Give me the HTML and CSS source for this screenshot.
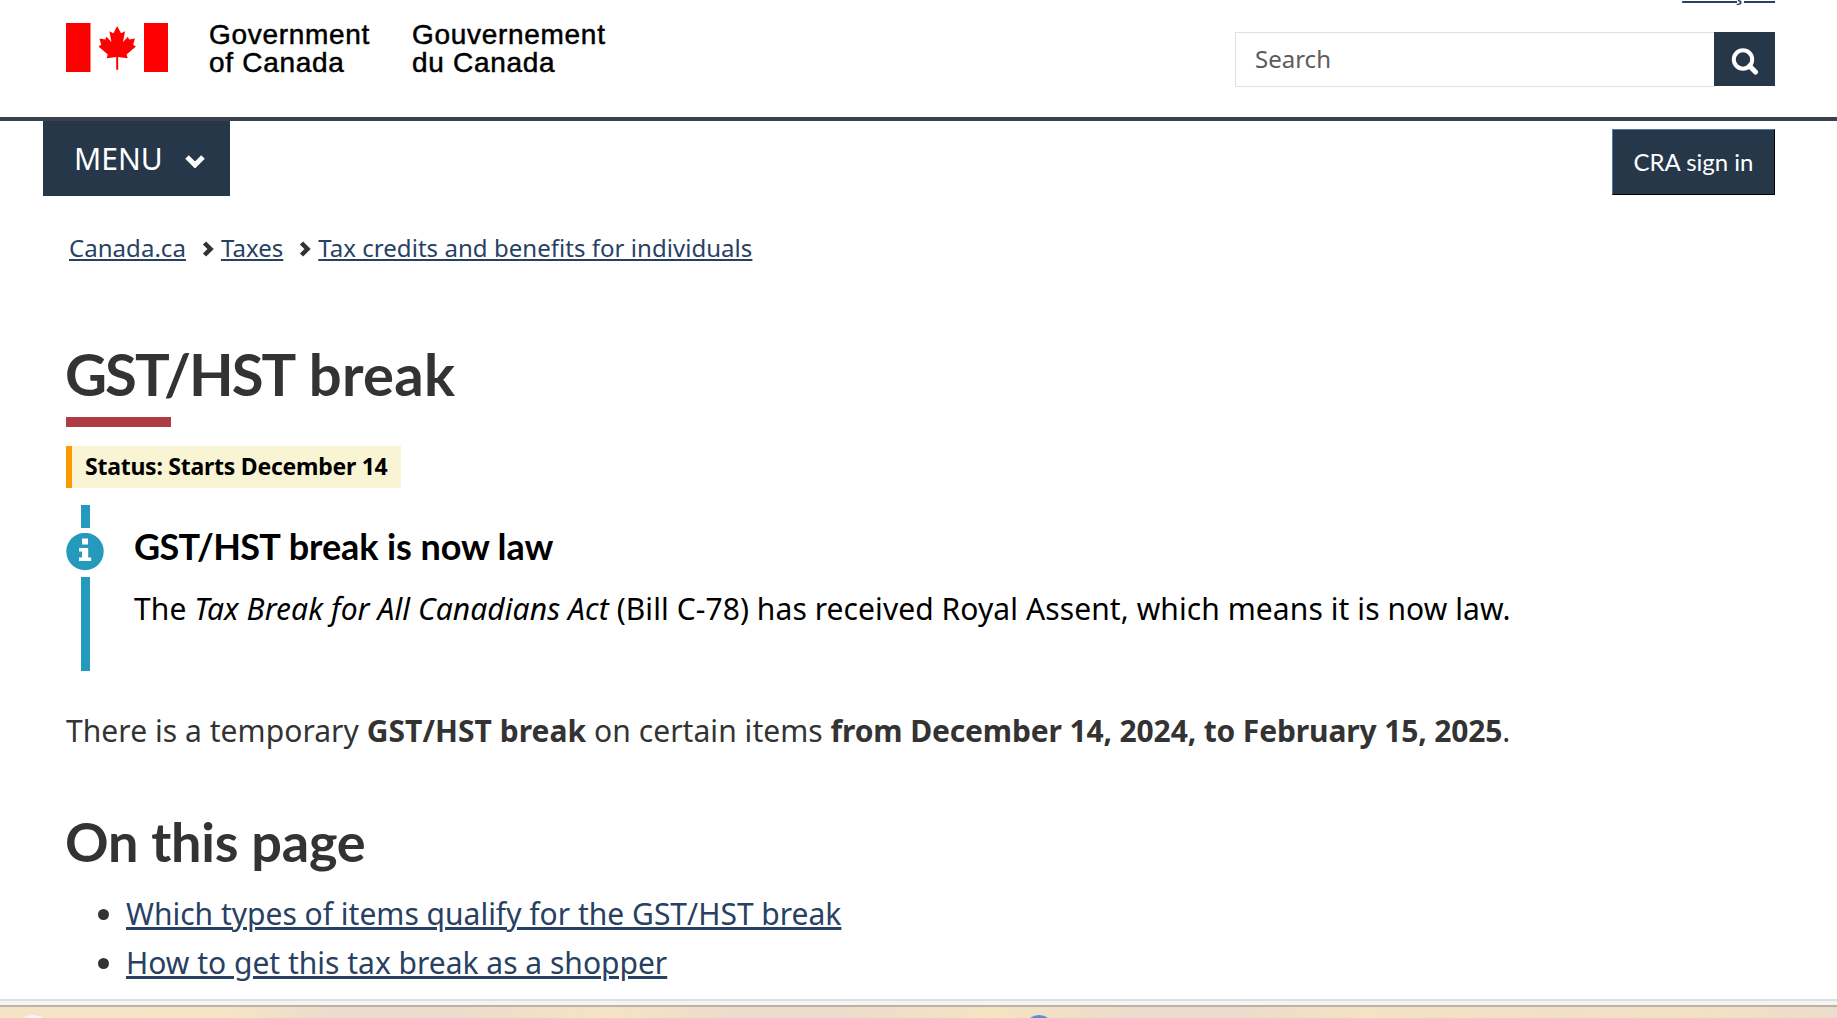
FILE: index.html
```html
<!DOCTYPE html>
<html lang="en">
<head>
  <meta charset="UTF-8" />
  <title>GST/HST break - Canada.ca</title>
  <link rel="stylesheet" href="styles.css">
</head>
<body>

  <header class="site-header">
    <div class="brand">
      <svg class="flag" viewBox="0 0 102 49" width="102" height="49">
        <path fill="#f00" d="M0 0h24.5v49H0zM78 0H102v49H78z"/>
        <path fill="#f00" d="M51.200 3l-3.800 7.200-4-2 2 10.800-4.900-5.200-1.200 2.700-5.800-1.100 1.700 6.300-2.700 1.700 9.300 8-1.100 3.900 9.500-1.300v12.800h2v-12.800l9.500 1.300-1.100-3.900 9.300-8-2.700-1.700 1.700-6.300-5.800 1.100-1.200-2.700-4.900 5.200 2-10.800-4 2z"/>
      </svg>
      <div class="brand-text brand-en">Government<br>of Canada</div>
      <div class="brand-text">Gouvernement<br>du Canada</div>
    </div>
    <div class="header-right">
      <a class="lang" href="#">Français</a>
      <form class="search">
        <input type="text" placeholder="Search">
        <button type="button" aria-label="Search">
          <svg viewBox="0 0 28 28" width="28" height="28" fill="none" stroke="#fff">
            <circle cx="12" cy="12.500" r="9.200" stroke-width="4"/>
            <path d="M18.500 19l6 6" stroke-width="5" stroke-linecap="round"/>
          </svg>
        </button>
      </form>
    </div>
  </header>

  <nav class="menu-bar">
    <button class="menu-btn">MENU
      <svg viewBox="0 0 20 14" width="20" height="14"><path d="M2 3l8 8 8-8" fill="none" stroke="#fff" stroke-width="5"/></svg>
    </button>
    <button class="sign-in">CRA sign in</button>
  </nav>

  <main>
    <!-- Breadcrumb -->
    <ol class="breadcrumb">
      <li><a href="#">Canada.ca</a></li>
      <li><svg viewBox="0 0 12 16" width="12" height="16"><path d="M2.500 2l6 6-6 6" fill="none" stroke="#333" stroke-width="4.500"/></svg><a href="#">Taxes</a></li>
      <li><svg viewBox="0 0 12 16" width="12" height="16"><path d="M2.500 2l6 6-6 6" fill="none" stroke="#333" stroke-width="4.500"/></svg><a href="#">Tax credits and benefits for individuals</a></li>
    </ol>

    <h1><span class="tight">GST/HST</span> break</h1>
    <div class="status">Status: Starts December 14</div>

    <!-- Info alert -->
    <section class="alert">
      <div class="alert-side">
        <span class="bar bar-top"></span>
        <svg viewBox="0 0 38 38" width="38" height="38">
          <circle cx="19" cy="18.500" r="18.700" fill="#269abc"/>
          <path fill="#fff" d="M16 5.500h6v6h-6zM13 15h9.200v9.500h3v3.500H13V24.500h3v-6h-3z"/>
        </svg>
        <span class="bar bar-bottom"></span>
      </div>
      <div class="alert-body">
        <h3><span class="tight">GST/HST</span> break is now law</h3>
        <p>The <em>Tax Break for All Canadians Act</em> (Bill C-78) has received Royal Assent, which means it is now law.</p>
      </div>
    </section>

    <p class="intro">There is a temporary <strong>GST/HST break</strong> on certain items <strong class="dates">from December 14, 2024, to February 15, 2025</strong>.</p>

    <h2>On this page</h2>
    <ul class="toc">
      <li><a href="#">Which types of items qualify for the GST/HST break</a></li>
      <li><a href="#">How to get this tax break as a shopper</a></li>
    </ul>
  </main>

  <footer class="bottom-strip">
    <span class="dot dot-white"></span>
    <span class="dot dot-blue"></span>
  </footer>

</body>
</html>
```
FILE: styles.css
```css
* {
  box-sizing: border-box;
}
body {
  margin: 0;
  height: 1018px;
  overflow: hidden;
  background-color: #fff;
  color: #333;
  font-family: "Noto Sans", sans-serif;
  font-size: 30px;
}
a {
  color: #284162;
  text-decoration: underline;
}
h1, h2, h3, p, ul, ol {
  margin: 0;
  padding: 0;
}
h1, h2, h3 {
  font-family: Lato, sans-serif;
  font-weight: bold;
}
button {
  border: 0;
  padding: 0;
  background-color: #26374a;
  color: #fff;
  font-family: inherit;
}
svg {
  display: block;
}

/* Header */
.site-header {
  display: flex;
  justify-content: space-between;
  height: 121px;
  padding: 0 62px 0 66px;
  border-bottom: 4px solid #38414d;
}
.brand {
  display: flex;
}
.flag {
  margin-top: 23px;
}
.brand-text {
  margin-top: 21px;
  font-family: "Liberation Sans", sans-serif;
  font-size: 28px;
  line-height: 28px;
  letter-spacing: 0.7px;
  color: #000;
  -webkit-text-stroke: 0.5px #000;
}
.brand-en {
  width: 203px;
  margin-left: 41px;
}
.header-right {
  display: flex;
  flex-direction: column;
  align-items: flex-end;
}
.lang {
  margin-top: -26px;
  font-size: 24px;
  line-height: 32px;
}
.search {
  display: flex;
  margin-top: 26px;
}
.search input {
  width: 479px;
  height: 55px;
  padding: 0 19px 2px 19px;
  border: 1px solid #e0e0e0;
  border-right: 0;
  font-family: inherit;
  font-size: 24px;
}
.search input::placeholder {
  color: #5c5c5c;
}
.search button {
  display: flex;
  width: 61px;
  height: 54px;
  padding: 15px 0 0 17px;
}

/* Menu row */
.menu-bar {
  display: flex;
  justify-content: space-between;
  align-items: flex-start;
  height: 75px;
  padding: 0 62px 0 43px;
}
.menu-btn {
  display: flex;
  align-items: center;
  gap: 22px;
  width: 187px;
  height: 75px;
  padding: 0 0 0 31px;
  font-size: 30px;
}
.menu-btn svg {
  margin-top: 5px;
}
.sign-in {
  width: 163px;
  height: 66px;
  margin-top: 8px;
  padding-bottom: 2px;
  border: 1px solid;
  border-color: #4d79a8 #000 #000 #4d79a8;
  font-family: Lato, sans-serif;
  font-size: 24px;
}

main {
  padding: 0 66px;
}
.breadcrumb {
  display: flex;
  margin: 34px 0 0 3px;
  list-style: none;
  font-size: 24px;
  line-height: 36px;
  letter-spacing: 0.04px;
}
.breadcrumb li {
  display: flex;
  align-items: center;
}
.breadcrumb svg {
  margin: 2px 7px 0 16px;
}
h1 {
  margin-top: 73px;
  font-size: 58px;
  line-height: 70px;
  letter-spacing: 0.3px;
  text-indent: -1px;
}
h1 .tight {
  letter-spacing: -2px;
}
h1::after {
  content: "";
  display: block;
  width: 105px;
  height: 10px;
  margin-top: 8px;
  background-color: #af3c43;
}
.status {
  width: 335px;
  height: 42px;
  margin-top: 19px;
  padding-left: 13px;
  border-left: 6px solid #ff9900;
  background-color: #f9f4d4;
  color: #000;
  font-size: 23px;
  font-weight: bold;
  line-height: 40px;
  letter-spacing: -0.25px;
  white-space: nowrap;
}

/* Alert */
.alert {
  display: flex;
  gap: 30px;
  height: 166px;
  margin-top: 17px;
  color: #000;
}
.alert-side {
  display: flex;
  flex-direction: column;
  align-items: center;
  width: 38px;
}
.bar {
  width: 9px;
  background-color: #269abc;
}
.bar-top {
  height: 23px;
  margin-bottom: 5px;
}
.bar-bottom {
  height: 94px;
  margin-top: 6px;
}
.alert-body {
  padding-top: 21px;
}
.alert h3 {
  font-size: 36px;
  line-height: 40px;
  letter-spacing: -0.1px;
}
.alert h3 .tight {
  letter-spacing: -0.7px;
}
.alert p {
  margin-top: 18px;
  line-height: 50px;
  letter-spacing: 0.08px;
}
.intro {
  margin-top: 35px;
  line-height: 50px;
  letter-spacing: 0.05px;
}
.dates {
  letter-spacing: -0.14px;
}

h2 {
  margin-top: 54px;
  font-size: 54px;
  line-height: 64px;
  letter-spacing: -0.2px;
  text-indent: -1px;
}
.toc {
  margin-top: 15px;
  padding-left: 60px;
  line-height: 49px;
}

/* Strip under the page */
.bottom-strip {
  display: flex;
  height: 19px;
  margin-top: 12px;
  padding-top: 16px;
  background:
    linear-gradient(#dedede, #dedede) 0 0 / 100% 2px no-repeat,
    linear-gradient(#f4f4f4, #f4f4f4) 0 2px / 100% 4px no-repeat,
    linear-gradient(#bdb3a5, #bdb3a5) 0 6px / 100% 2px no-repeat,
    linear-gradient(90deg, #f5e3c6, #f5e5c4 12%, #ebdccd 18%, #ecdccc 25%, #f4e4c4 33%, #ecdccc 40%, #ecdccc 46%, #f4e4c2 54%, #ebdbcc 62%, #ebdbcc 67%, #f3e3c3 74%, #f1e0c8 85%, #f2e2c3 92%, #ecdccc);
  overflow: hidden;
}
.dot {
  flex: none;
  border-radius: 50%;
}
.dot-white {
  width: 40px;
  height: 40px;
  margin-left: 13px;
  background-color: #faf6ef;
}
.dot-blue {
  width: 30px;
  height: 30px;
  margin-left: 971px;
  background-color: #5b8dd6;
}
```
